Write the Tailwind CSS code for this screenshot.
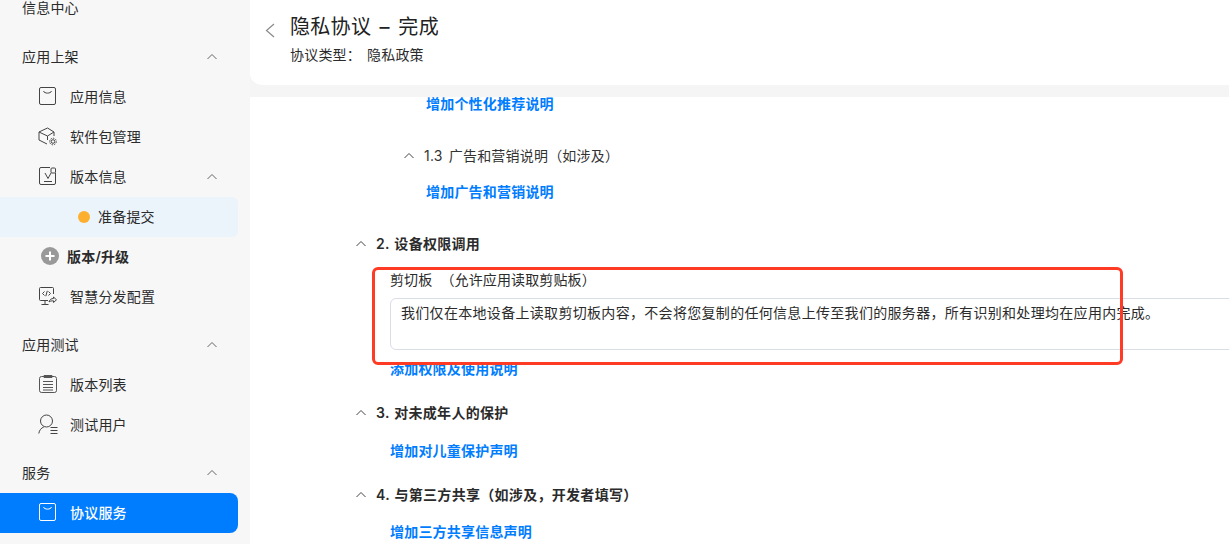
<!DOCTYPE html>
<html lang="zh-CN">
<head>
<meta charset="utf-8">
<script src="https://cdn.jsdelivr.net/npm/@tailwindcss/browser@4"></script>
</head>
<body class="m-0 w-[1229px] h-[544px] overflow-hidden bg-white text-[14px] tracking-[0.2px] text-[#2b2b2b] font-['Inter','Noto_Sans_CJK_SC',sans-serif]">
<div class="relative flex w-[1229px] h-[544px] overflow-hidden">
  <aside class="w-[250px] shrink-0 bg-[#f7f7f7] -mt-[12px] h-[556px] overflow-hidden [&>div]:pb-[2px]">
    <div class="h-[40px] pl-[22px] flex items-center">信息中心</div>
    <div class="h-[9px]"></div>
    <div class="h-[40px] w-[238px] pl-[22px] pr-[20px] flex items-center justify-between"><span>应用上架</span><svg width="12" height="7" viewBox="0 0 12 7" fill="none" stroke="#666" stroke-width="1"><path d="M1.5 6 6 1.5 10.500 6"/></svg></div>
    <div class="h-[40px] w-[238px] pl-[39px] flex items-center gap-[14px]">
      <svg width="17" height="18" viewBox="0 0 17 18" fill="none" stroke="#444" stroke-width="1"><rect x=".5" y=".5" width="16" height="17" rx="1.500"/><path d="M4.500 4c.6 2.800 7.400 2.800 8 0"/></svg><span>应用信息</span></div>
    <div class="h-[40px] w-[238px] pl-[38px] flex items-center gap-[13px]">
      <svg width="19" height="19" viewBox="0 0 19 19" fill="none" stroke="#444" stroke-width="1"><path d="M9.500 1 1 5v8l8 4M9.500 1 16 5v4M1 5l8.500 4L16 5M9.500 9v4"/><circle cx="15" cy="14.500" r="1.800"/><circle cx="15" cy="14.500" r="3.300" stroke-dasharray="1.500 1"/></svg><span>软件包管理</span></div>
    <div class="h-[40px] w-[238px] pl-[39px] pr-[20px] flex items-center">
      <svg width="18" height="18" viewBox="0 0 18 18" fill="none" stroke="#444" stroke-width="1"><path d="M11 .5H2A1.500 1.500 0 0 0 .5 2v14A1.500 1.500 0 0 0 2 17.500h13a1.500 1.500 0 0 0 1.500-1.500V6"/><rect x="12" y="1" width="4.500" height="5" rx="1"/><path d="M6 6l3 5.500L12 6M5 14.500h8"/></svg><span class="ml-[13px] flex-1">版本信息</span><svg width="12" height="7" viewBox="0 0 12 7" fill="none" stroke="#666" stroke-width="1"><path d="M1.5 6 6 1.500 10.500 6"/></svg></div>
    <div class="h-[40px] w-[238px] bg-[#ebf3fb] rounded-r-[6px] pl-[78px] flex items-center gap-[8px] !pb-0"><span class="w-[12px] h-[12px] rounded-full bg-[#fdb02f]"></span><span class="-mt-[2px]">准备提交</span></div>
    <div class="h-[40px] w-[238px] pl-[41px] flex items-center gap-[8px] font-semibold">
      <svg width="18" height="18" viewBox="0 0 18 18"><circle cx="9" cy="9" r="9" fill="#999"/><path d="M9 4.500v9M4.500 9h9" stroke="#fff" stroke-width="2"/></svg><span>版本/升级</span></div>
    <div class="h-[40px] w-[238px] pl-[39px] flex items-center gap-[13px]">
      <svg width="18" height="18" viewBox="0 0 18 18" fill="none" stroke="#444" stroke-width="1"><path d="M9 13.500H1.500a1 1 0 0 1-1-1V1.500a1 1 0 0 1 1-1h12a1 1 0 0 1 1 1V7"/><path d="M6 13.500v3.500M2.500 17.500h7M5.500 4.500 3.500 6.500l2 2M9.500 4.500l2 2-2 2M8.300 3.800 6.800 9.200"/><path d="M10 15c.5-2.500 2.500-3.500 4.500-3.500V10l3 2.800-3 2.700v-1.700c-2 0-3.500.2-4.500 1.200z"/></svg><span>智慧分发配置</span></div>
    <div class="h-[8px]"></div>
    <div class="h-[40px] w-[238px] pl-[22px] pr-[20px] flex items-center justify-between"><span>应用测试</span><svg width="12" height="7" viewBox="0 0 12 7" fill="none" stroke="#666" stroke-width="1"><path d="M1.5 6 6 1.500 10.500 6"/></svg></div>
    <div class="h-[40px] w-[238px] pl-[39px] flex items-center gap-[13px]">
      <svg width="18" height="18" viewBox="0 0 18 18" fill="none" stroke="#555" stroke-width="1"><rect x=".5" y="1.500" width="17" height="16" rx="2"/><path d="M5 .5h8v2H5zM4 6.500h10M4 9.500h10M4 12.500h10M4 15h10"/></svg><span>版本列表</span></div>
    <div class="h-[40px] w-[238px] pl-[38px] flex items-center gap-[12px]">
      <svg width="20" height="20" viewBox="0 0 20 20" fill="none" stroke="#444" stroke-width="1"><circle cx="8.500" cy="7" r="6"/><path d="M.8 19.500c.5-3.500 2.500-5.500 5-6.500M12.500 13.500h7M12.500 16.500h7M12.500 19.500h7"/></svg><span>测试用户</span></div>
    <div class="h-[8px]"></div>
    <div class="h-[40px] w-[238px] pl-[22px] pr-[20px] flex items-center justify-between"><span>服务</span><svg width="12" height="7" viewBox="0 0 12 7" fill="none" stroke="#666" stroke-width="1"><path d="M1.5 6 6 1.500 10.500 6"/></svg></div>
    <div class="h-[40px] w-[238px] bg-[#007dff] text-white rounded-r-[8px] pl-[39px] flex items-center gap-[14px] font-medium">
      <svg width="17" height="18" viewBox="0 0 17 18" fill="none" stroke="#fff" stroke-width="1"><rect x=".5" y=".5" width="16" height="17" rx="1.500"/><path d="M4.500 4c.6 2.800 7.400 2.800 8 0"/></svg><span>协议服务</span></div>
  </aside>
  <main class="flex-1 min-w-0 flex flex-col">
    <header class="h-[97px] shrink-0 bg-[#f5f5f5]">
      <div class="h-[85px] bg-white rounded-bl-[12px] flex pl-[14px]">
        <svg class="mt-[23px]" width="12" height="15" viewBox="0 0 12 15" fill="none" stroke="#8a8a8a" stroke-width="1.200"><path d="M10 1 2.500 7.500 10 14"/></svg>
        <div class="ml-[14px] pt-[12px]">
          <div class="text-[20px] leading-[30px] font-normal text-[#222] whitespace-pre tracking-[0.3px] [word-spacing:2.5px]">隐私协议 – 完成</div>
          <div class="mt-[1px] text-[14px] leading-[24px] flex"><span class="w-[77px]">协议类型：</span><span>隐私政策</span></div>
        </div>
      </div>
    </header>
    <section class="flex-1 bg-white pl-[105px] relative">
      <div class="pl-[71px] h-[14px] leading-[14px] font-semibold text-[#007dff]">增加个性化推荐说明</div>
      <div class="mt-[32px] pl-[48px] flex items-center h-[24px] text-[#333]"><svg width="12" height="7" viewBox="0 0 12 7" fill="none" stroke="#444" stroke-width="1"><path d="M1.5 6 6 1.500 10.500 6"/></svg><span class="ml-[9px] whitespace-pre">1.3 <span class="ml-[2px]">广告和营销说明（如涉及）</span></span></div>
      <div class="mt-[13px] pl-[71px] leading-[24px] font-semibold text-[#007dff]">增加广告和营销说明</div>
      <div class="mt-[27px] flex items-center h-[24px] font-semibold"><svg width="12" height="7" viewBox="0 0 12 7" fill="none" stroke="#444" stroke-width="1"><path d="M1.5 6 6 1.500 10.500 6"/></svg><span class="ml-[9px] tracking-[0.3px] [word-spacing:1px]">2. 设备权限调用</span></div>
      <div class="mt-[13px] pl-[35px] h-[24px] leading-[24px] whitespace-pre tracking-[0.12px]">剪切板  （允许应用读取剪贴板）</div>
      <div class="ml-[35px] mt-[6px] w-[900px] h-[52px] border border-[#d9dde5] rounded-l-[6px] pl-[10px] pt-[2px] leading-[24px] whitespace-nowrap tracking-[0.31px]">我们仅在本地设备上读取剪切板内容，不会将您复制的任何信息上传至我们的服务器，所有识别和处理均在应用内完成。</div>
      <div class="mt-[7px] pl-[35px] leading-[24px] font-semibold text-[#007dff]">添加权限及使用说明</div>
      <div class="mt-[19px] flex items-center h-[24px] font-semibold"><svg width="12" height="7" viewBox="0 0 12 7" fill="none" stroke="#444" stroke-width="1"><path d="M1.5 6 6 1.500 10.500 6"/></svg><span class="ml-[9px] tracking-[0.3px] [word-spacing:1px]">3. 对未成年人的保护</span></div>
      <div class="mt-[15px] pl-[35px] leading-[24px] font-semibold text-[#007dff]">增加对儿童保护声明</div>
      <div class="mt-[19px] flex items-center h-[24px] font-semibold"><svg width="12" height="7" viewBox="0 0 12 7" fill="none" stroke="#444" stroke-width="1"><path d="M1.5 6 6 1.500 10.500 6"/></svg><span class="ml-[9px] tracking-[0.3px] [word-spacing:1px]">4. 与第三方共享（如涉及，开发者填写）</span></div>
      <div class="mt-[14px] pl-[35px] leading-[24px] font-semibold text-[#007dff]">增加三方共享信息声明</div>
    </section>
  </main>
  <div class="absolute left-[372px] top-[267px] w-[751px] h-[98px] border-[3px] border-[#ff3b25] rounded-[6px] pointer-events-none"></div>
</div>
</body>
</html>
